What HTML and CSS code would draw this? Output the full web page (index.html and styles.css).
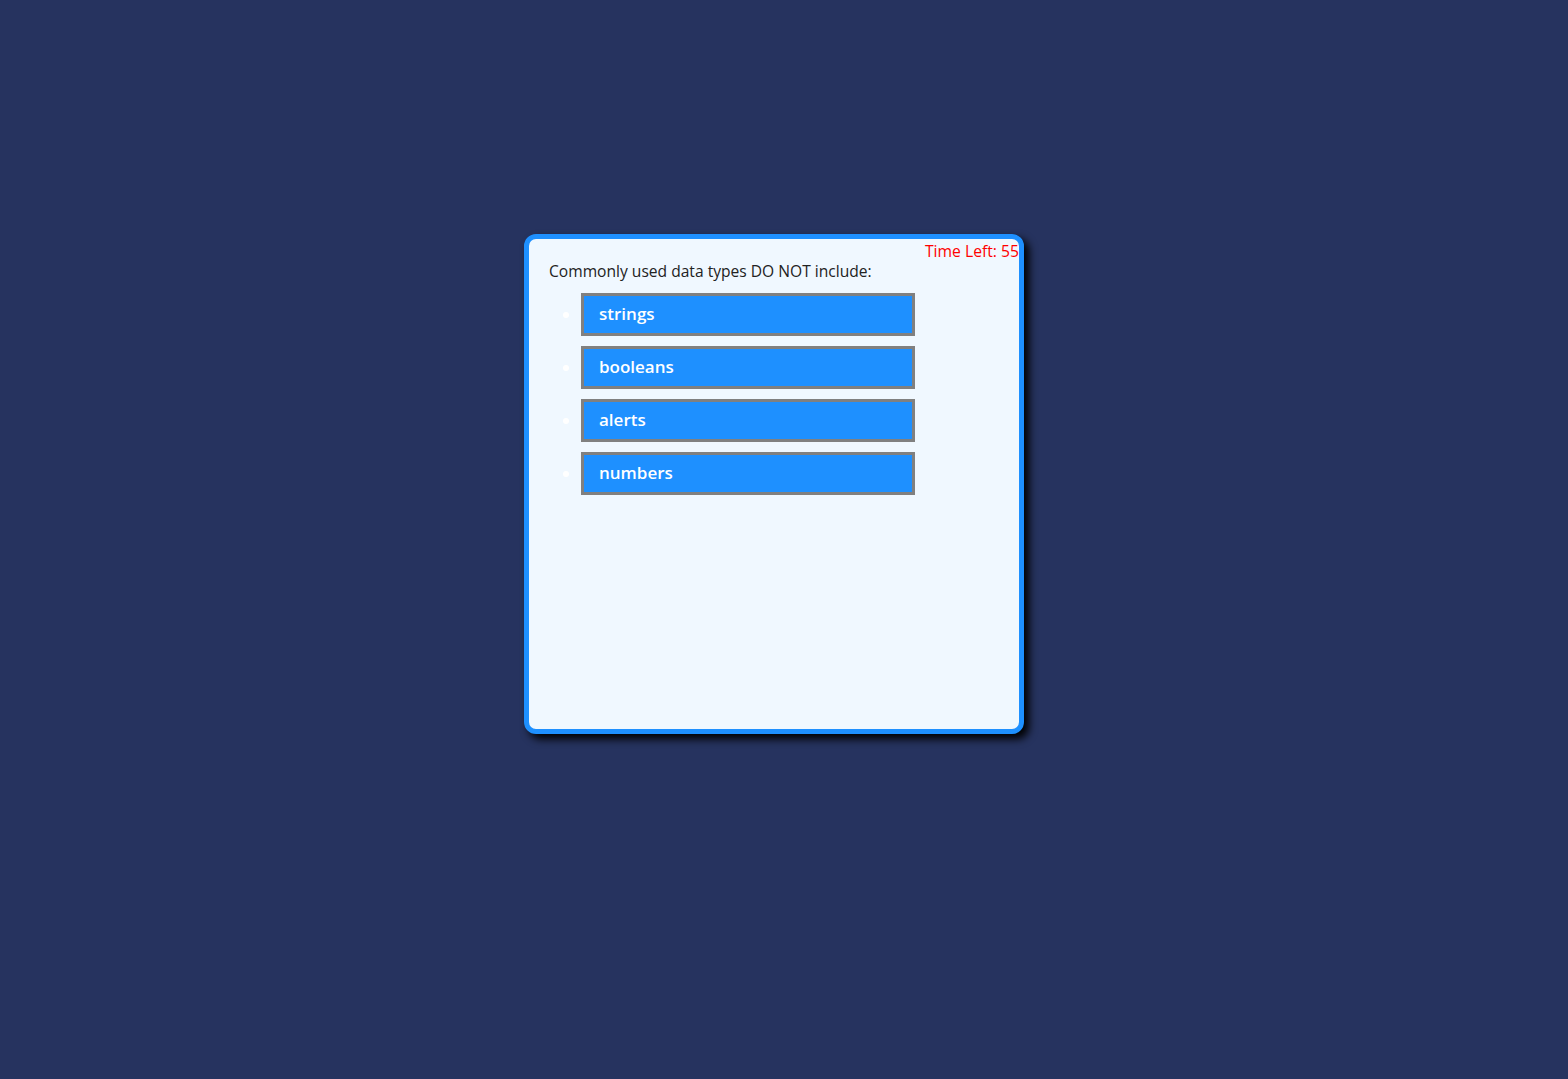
FILE: index.html
```html
<!DOCTYPE html>
<html>
<head>
<meta charset="utf-8">
<link rel="stylesheet" href="styles.css">
</head>
<body>
<main class="stage">
  <section class="card">
    <div class="timer">Time Left: 55</div>
    <p class="question">Commonly used data types DO NOT include:</p>
    <ul class="answers">
      <li><button class="answer">strings</button></li>
      <li><button class="answer">booleans</button></li>
      <li><button class="answer">alerts</button></li>
      <li><button class="answer">numbers</button></li>
    </ul>
  </section>
</main>
</body>
</html>
```
FILE: styles.css
```css
html, body {
  margin: 0;
  padding: 0;
  background: #26335f;
  height: 100%;
}
.stage {
  padding: 234px 0 0 524px;
  font-family: "Open Sans", "Noto Sans", sans-serif;
}
.card {
  box-sizing: border-box;
  width: 500px;
  height: 500px;
  background: #f0f8ff;
  border: 5px solid #1e90ff;
  border-radius: 12px;
  box-shadow: 5px 5px 8px #000;
}
.timer {
  text-align: right;
  color: #ff0000;
  font-size: 15.7px;
  line-height: 20px;
  margin-top: 2px;
}
.question {
  margin: 0 0 0 20px;
  font-size: 15.6px;
  line-height: 20px;
  color: #222;
}
.answers {
  margin: 12px 0 0 0;
  padding-left: 52px;
  color: #fff;
}
.answers li {
  margin-bottom: 10px;
  line-height: 0;
}
.answer {
  box-sizing: border-box;
  width: 334px;
  height: 43px;
  background: #1e90ff;
  border: 3px solid #808080;
  color: #fff;
  font-family: "Open Sans", "Noto Sans", sans-serif;
  font-size: 17px;
  font-weight: 600;
  text-align: left;
  padding: 0 0 2px 15px;
  margin: 0;
}
```
